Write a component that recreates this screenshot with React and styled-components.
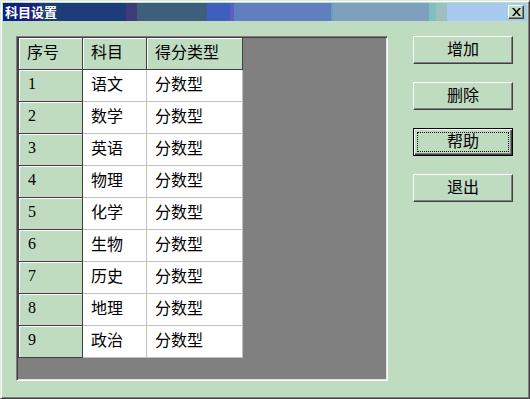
import React from "react";
import styled, { createGlobalStyle } from "styled-components";

const GlobalStyle = createGlobalStyle`
  html, body {
    margin: 0;
    padding: 0;
    background: #c0dcc0;
  }
  body {
    font-family: "SimSun", "Noto Sans CJK SC", sans-serif;
  }
`;

const subjects = [
  { id: 1, name: "语文", type: "分数型" },
  { id: 2, name: "数学", type: "分数型" },
  { id: 3, name: "英语", type: "分数型" },
  { id: 4, name: "物理", type: "分数型" },
  { id: 5, name: "化学", type: "分数型" },
  { id: 6, name: "生物", type: "分数型" },
  { id: 7, name: "历史", type: "分数型" },
  { id: 8, name: "地理", type: "分数型" },
  { id: 9, name: "政治", type: "分数型" },
];

const actions = ["增加", "删除", "帮助", "退出"];

const App = () => {
  return (
    <>
      <GlobalStyle />
      <Window>
        <TitleBar>
          <Caption>科目设置</Caption>
          <CloseButton aria-label="关闭">
            <svg width="9" height="8" viewBox="0 0 9 8">
              <path d="M0 0h2l2.5 3 2.5-3h2L5.5 4 9 8H7L4.5 5 2 8H0l3.5-4z" fill="#000" />
            </svg>
          </CloseButton>
        </TitleBar>

        <Body>
          <GridFrame>
            <Table>
              <HeadCell $first>序号</HeadCell>
              <HeadCell>科目</HeadCell>
              <HeadCell>得分类型</HeadCell>
              {subjects.map((s) => (
                <React.Fragment key={s.id}>
                  <RowHead>{s.id}</RowHead>
                  <Cell>{s.name}</Cell>
                  <Cell>{s.type}</Cell>
                </React.Fragment>
              ))}
            </Table>
          </GridFrame>

          <ButtonColumn>
            {actions.map((a) => (
              <Button key={a} $default={a === "帮助"}>
                {a === "帮助" ? <FocusRect>{a}</FocusRect> : a}
              </Button>
            ))}
          </ButtonColumn>
        </Body>
      </Window>
    </>
  );
};

const Window = styled.div`
  box-sizing: border-box;
  width: 530px;
  height: 399px;
  background: #c0dcc0;
  border: 1px solid;
  border-color: #d8ecd8 #404040 #404040 #d8ecd8;
  box-shadow: inset 1px 1px #ffffff, inset -1px -1px #808080;
  padding: 2px;
  display: flex;
  flex-direction: column;
`;

const TitleBar = styled.div`
  height: 18px;
  display: flex;
  align-items: center;
  justify-content: space-between;
  padding: 0 3px 0 2px;
  background: linear-gradient(
    to right,
    #10207f 0px, #10207f 20px,
    #20207f 20px, #20207f 37px,
    #1f3c7a 37px, #1f3c7a 123px,
    #3f3a7a 123px, #3f3a7a 134px,
    #3e5e7e 134px, #3e5e7e 204px,
    #3f5fbf 204px, #3f5fbf 227px,
    #5f5fbf 227px, #5f5fbf 231px,
    #5f7fbf 231px, #5f7fbf 328px,
    #5f9fbf 328px, #5f9fbf 330px,
    #7f9fbf 330px, #7f9fbf 426px,
    #7fbfbf 426px, #7fbfbf 433px,
    #9fbfbf 433px, #9fbfbf 444px,
    #a6caf0 444px, #a6caf0 100%
  );
`;

const Caption = styled.span`
  color: #ffffff;
  font-family: "Noto Sans CJK SC", sans-serif;
  font-size: 13px;
  font-weight: bold;
  line-height: 14px;
  margin-top: -1px;
`;

const CloseButton = styled.div`
  box-sizing: border-box;
  width: 16px;
  height: 14px;
  display: flex;
  align-items: center;
  justify-content: center;
  background: #c0dcc0;
  border: 1px solid;
  border-color: #ffffff #404040 #404040 #ffffff;
  box-shadow: inset -1px -1px #808080;
`;

const Body = styled.div`
  flex: 1;
  display: flex;
  align-items: flex-start;
  gap: 25px;
  padding: 15px 0 0 13px;
`;

const GridFrame = styled.div`
  box-sizing: border-box;
  width: 372px;
  height: 345px;
  background: #808080;
  border: 1px solid;
  border-color: #808080 #ffffff #ffffff #808080;
  box-shadow: inset 1px 1px #404040, inset -1px -1px #d8ecd8;
  padding: 1px;
`;

const Table = styled.div`
  display: grid;
  grid-template-columns: 65px 64px 96px;
  grid-auto-rows: 32px;
  width: max-content;
`;

const CellBase = styled.div`
  box-sizing: border-box;
  display: flex;
  align-items: center;
  padding: 0 0 5px 8px;
  font-size: 16px;
  color: #000000;
  font-family: "SimSun", "Noto Sans CJK SC", sans-serif;
`;

const HeadCell = styled(CellBase)`
  background: #c0dcc0;
  border-right: 1px solid #404040;
  border-bottom: 1px solid #404040;
  border-left: ${(p) => (p.$first ? "1px solid #404040" : "none")};
  box-shadow: inset 1px 1px #ffffff;
`;

const RowHead = styled(CellBase)`
  background: #c0dcc0;
  border-left: 1px solid #404040;
  border-right: 1px solid #404040;
  border-bottom: 1px solid #404040;
  box-shadow: inset 1px 1px #ffffff;
  padding: 0 0 3px 9px;
  font-family: "Liberation Serif", serif;
  font-size: 16px;
`;

const Cell = styled(CellBase)`
  background: #ffffff;
  border-right: 1px solid #c0c0c0;
  border-bottom: 1px solid #c0c0c0;
`;

const ButtonColumn = styled.div`
  display: flex;
  flex-direction: column;
  gap: 18px;
`;

const Button = styled.div`
  box-sizing: border-box;
  width: 100px;
  height: 28px;
  display: flex;
  align-items: center;
  justify-content: center;
  background: #c0dcc0;
  font-size: 16px;
  color: #000000;
  border: 1px solid;
  border-color: ${(p) =>
    p.$default ? "#000000" : "#ffffff #404040 #404040 #ffffff"};
  box-shadow: ${(p) =>
    p.$default
      ? "inset 1px 1px #ffffff, inset -1px -1px #404040, inset -2px -2px #808080"
      : "inset -1px -1px #808080"};
  padding: ${(p) => (p.$default ? "3px" : "0 0 4px")};
`;

const FocusRect = styled.div`
  box-sizing: border-box;
  width: 100%;
  height: 100%;
  display: flex;
  align-items: center;
  justify-content: center;
  padding-bottom: 4px;
  border: 1px dotted #000000;
`;

export default App;
